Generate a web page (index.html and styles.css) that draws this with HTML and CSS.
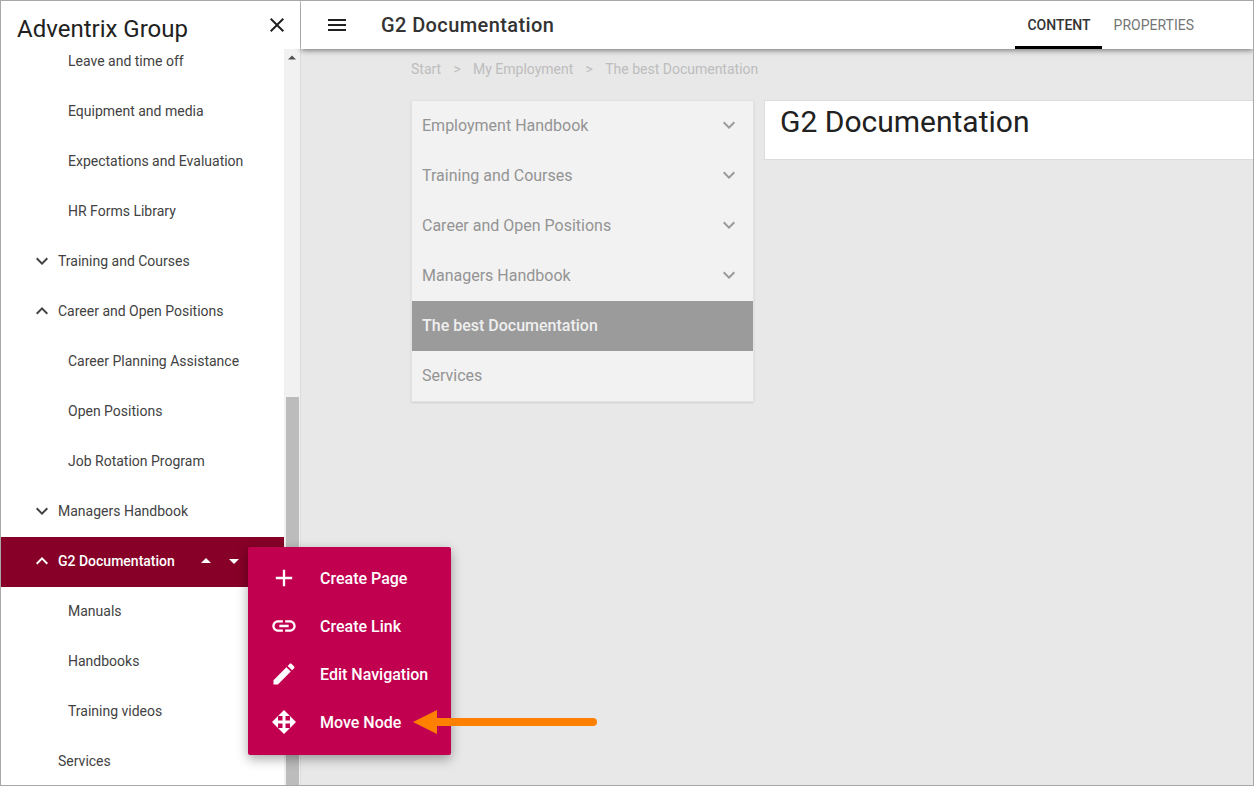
FILE: index.html
```html
<!DOCTYPE html>
<html lang="en">

<head>
    <meta charset="UTF-8">
    <title>G2 Documentation</title>
    <link rel="stylesheet" href="styles.css">
</head>

<body>
    <div class="app">
        <aside class="sidebar">
            <div class="sidebar-head">
                <span class="brand">Adventrix Group</span>
                <svg class="icon close-icon" viewBox="0 0 24 24"><path d="M19 6.41L17.59 5 12 10.59 6.41 5 5 6.41 10.59 12 5 17.59 6.41 19 12 13.41 17.59 19 19 17.59 13.41 12z"/></svg>
            </div>
            <div class="sidebar-body">
                <ul class="tree">
                    <li class="child">Leave and time off</li>
                    <li class="child">Equipment and media</li>
                    <li class="child">Expectations and Evaluation</li>
                    <li class="child">HR Forms Library</li>
                    <li class="parent"><svg class="icon chevron" viewBox="0 0 24 24"><path d="M16.59 8.59L12 13.17 7.41 8.59 6 10l6 6 6-6z"/></svg>Training and Courses</li>
                    <li class="parent"><svg class="icon chevron" viewBox="0 0 24 24"><path d="M12 8l-6 6 1.41 1.41L12 10.83l4.59 4.58L18 14z"/></svg>Career and Open Positions</li>
                    <li class="child">Career Planning Assistance</li>
                    <li class="child">Open Positions</li>
                    <li class="child">Job Rotation Program</li>
                    <li class="parent"><svg class="icon chevron" viewBox="0 0 24 24"><path d="M16.59 8.59L12 13.17 7.41 8.59 6 10l6 6 6-6z"/></svg>Managers Handbook</li>
                    <li class="parent selected">
                        <svg class="icon chevron" viewBox="0 0 24 24"><path d="M12 8l-6 6 1.41 1.41L12 10.83l4.59 4.58L18 14z"/></svg>G2 Documentation
                        <svg class="icon caret caret-up" viewBox="0 0 24 24"><path d="M7 14l5-5 5 5z"/></svg>
                        <svg class="icon caret" viewBox="0 0 24 24"><path d="M7 10l5 5 5-5z"/></svg>
                    </li>
                    <li class="child">Manuals</li>
                    <li class="child">Handbooks</li>
                    <li class="child">Training videos</li>
                    <li class="parent">Services</li>
                </ul>
                <div class="scrollbar">
                    <svg class="scroll-arrow" viewBox="0 0 10 6"><path d="M0 5.5L5 .5l5 5z"/></svg>
                    <div class="scroll-thumb"></div>
                </div>
            </div>
        </aside>

        <main class="main">
            <header class="topbar">
                <svg class="icon menu-icon" viewBox="0 0 24 24"><path d="M3 18h18v-2H3v2zm0-5h18v-2H3v2zm0-7v2h18V6H3z"/></svg>
                <span class="page-title">G2 Documentation</span>
                <nav class="tabs">
                    <span class="tab active">CONTENT</span>
                    <span class="tab">PROPERTIES</span>
                </nav>
            </header>

            <div class="content">
                <div class="breadcrumb">
                    <span>Start</span>
                    <span class="sep">&gt;</span>
                    <span>My Employment</span>
                    <span class="sep">&gt;</span>
                    <span>The best Documentation</span>
                </div>
                <div class="columns">
                    <ul class="side-nav">
                        <li>Employment Handbook<svg class="icon" viewBox="0 0 24 24"><path d="M16.59 8.59L12 13.17 7.41 8.59 6 10l6 6 6-6z"/></svg></li>
                        <li>Training and Courses<svg class="icon" viewBox="0 0 24 24"><path d="M16.59 8.59L12 13.17 7.41 8.59 6 10l6 6 6-6z"/></svg></li>
                        <li>Career and Open Positions<svg class="icon" viewBox="0 0 24 24"><path d="M16.59 8.59L12 13.17 7.41 8.59 6 10l6 6 6-6z"/></svg></li>
                        <li>Managers Handbook<svg class="icon" viewBox="0 0 24 24"><path d="M16.59 8.59L12 13.17 7.41 8.59 6 10l6 6 6-6z"/></svg></li>
                        <li class="current">The best Documentation</li>
                        <li>Services</li>
                    </ul>
                    <div class="doc-card">
                        <h1>G2 Documentation</h1>
                    </div>
                </div>
            </div>
        </main>

        <!-- context menu opened from the selected node -->
        <div class="context-menu">
            <div class="menu-item"><svg class="icon" viewBox="0 0 24 24"><path d="M19 13h-6v6h-2v-6H5v-2h6V5h2v6h6v2z"/></svg>Create Page</div>
            <div class="menu-item"><svg class="icon" viewBox="0 0 24 24"><path d="M3.9 12c0-1.71 1.39-3.1 3.1-3.1h4V7H7c-2.76 0-5 2.24-5 5s2.24 5 5 5h4v-1.9H7c-1.71 0-3.1-1.39-3.1-3.1zM8 13h8v-2H8v2zm9-6h-4v1.9h4c1.71 0 3.1 1.39 3.1 3.1s-1.39 3.1-3.1 3.1h-4V17h4c2.76 0 5-2.24 5-5s-2.24-5-5-5z"/></svg>Create Link</div>
            <div class="menu-item"><svg class="icon" viewBox="0 0 24 24"><path d="M3 17.25V21h3.75L17.81 9.94l-3.75-3.75L3 17.25zM20.71 7.04c.39-.39.39-1.02 0-1.41l-2.34-2.34c-.39-.39-1.02-.39-1.41 0l-1.83 1.83 3.75 3.75 1.83-1.83z"/></svg>Edit Navigation</div>
            <div class="menu-item"><svg class="icon" viewBox="-2 -2 28 28"><path d="M12 0l6 6h-4.5v4.5H18V6l6 6-6 6v-4.5h-4.5V18H18l-6 6-6-6h4.5v-4.5H6V18l-6-6 6-6v4.5h4.5V6H6z"/></svg>Move Node</div>
        </div>

        <svg class="callout-arrow" viewBox="0 0 184 24">
            <path d="M180 12H20" stroke="#ff8000" stroke-width="8" stroke-linecap="round" fill="none"/>
            <path d="M0 12L24 0v24z" fill="#ff8000"/>
        </svg>
    </div>
</body>

</html>
```

FILE: styles.css
```css
* {
    box-sizing: border-box;
}

html,
body {
    height: 100%;
    margin: 0;
}

body {
    font-family: 'Roboto', 'Liberation Sans', sans-serif;
    color: #424242;
    overflow: hidden;
}

ul {
    list-style: none;
    margin: 0;
    padding: 0;
}

.icon {
    width: 24px;
    height: 24px;
    fill: currentColor;
    flex: none;
}

.app {
    position: relative;
    display: flex;
    height: 100%;
    border: 1px solid #a8a8a8;
    overflow: hidden;
}

/* sidebar */

.sidebar {
    display: flex;
    flex-direction: column;
    width: 300px;
    flex: none;
    border-right: 1px solid #dcdcdc;
    background: #fff;
}

.sidebar-head {
    display: flex;
    align-items: center;
    justify-content: space-between;
    height: 48px;
    flex: none;
    padding: 8px 11px 0 16px;
    position: relative;
    z-index: 1;
    background: #fff;
}

.brand {
    font-size: 24px;
    color: #212121;
}

.close-icon {
    margin-top: -8px;
    color: #212121;
}

.sidebar-body {
    display: flex;
    flex: 1;
    min-height: 0;
}

.tree {
    flex: 1;
    margin-top: -12px;
    font-size: 14px;
}

.tree li {
    display: flex;
    align-items: center;
    height: 50px;
    padding-bottom: 2px;
}

.tree .child {
    padding-left: 67px;
}

.tree .parent {
    padding-left: 57px;
}

.tree .chevron {
    margin-left: -28px;
    margin-right: 4px;
}

.tree .selected {
    background: #870027;
    color: #fff;
    font-weight: 500;
}

.caret {
    margin-left: 4px;
}

.caret-up {
    margin-left: 19px;
}

.scrollbar {
    display: flex;
    flex-direction: column;
    width: 16px;
    flex: none;
    background: #f1f1f1;
}

.scroll-arrow {
    width: 8px;
    height: 5px;
    margin: 6px 0 0 4px;
    fill: #505050;
}

.scroll-thumb {
    width: 13px;
    height: 388px;
    margin: auto 0 0 2px;
    background: #bcbcbc;
}

/* main area */

.main {
    display: flex;
    flex-direction: column;
    flex: 1;
    min-width: 0;
    background: #e8e8e8;
}

.topbar {
    display: flex;
    align-items: center;
    height: 48px;
    flex: none;
    padding-left: 24px;
    background: #fff;
    box-shadow: 0 1px 6px rgba(0, 0, 0, 0.55);
    position: relative;
}

.menu-icon {
    color: #212121;
}

.page-title {
    margin-left: 32px;
    font-size: 20px;
    font-weight: 500;
    letter-spacing: 0.4px;
    color: #333;
}

.tabs {
    display: flex;
    align-self: stretch;
    margin-left: auto;
    padding-right: 47px;
}

.tab {
    display: flex;
    align-items: center;
    padding: 2px 12px 0;
    font-size: 14px;
    color: #757575;
    border-bottom: 3px solid transparent;
}

.tab.active {
    padding-right: 11px;
    color: #333;
    font-weight: 500;
    border-bottom-color: #000;
}

.content {
    flex: 1;
    padding: 12px 0 0 110px;
}

.breadcrumb {
    display: flex;
    align-items: center;
    gap: 12.25px;
    height: 16px;
    font-size: 14px;
    color: #bdbdbd;
}

.columns {
    display: flex;
    align-items: flex-start;
    gap: 10px;
    margin-top: 23px;
}

.side-nav {
    width: 343px;
    flex: none;
    border: 1px solid #e2e2e2;
    background: #f2f2f2;
    font-size: 16px;
    color: #949494;
    box-shadow: 0 1px 2px rgba(0, 0, 0, 0.1);
}

.side-nav li {
    display: flex;
    align-items: center;
    justify-content: space-between;
    height: 50px;
    padding: 0 12px 2px 10px;
}

.side-nav .icon {
    color: #9a9a9a;
}

.side-nav .current {
    background: #9b9b9b;
    color: #efefef;
    font-weight: 500;
}

.doc-card {
    flex: 1;
    height: 60px;
    border: 1px solid #dcdcdc;
    border-right: 0;
    background: #fff;
    padding: 1px 0 0 15px;
}

.doc-card h1 {
    margin: 0;
    font-size: 30px;
    font-weight: 400;
    line-height: 40px;
    color: #212121;
}

/* overlays */

.context-menu {
    position: absolute;
    left: 247px;
    top: 546px;
    width: 203px;
    height: 208px;
    padding: 7px 0 9px;
    border-radius: 2px;
    background: #c20050;
    color: #fff;
    font-size: 16px;
    font-weight: 500;
    box-shadow: 0 4px 12px rgba(0, 0, 0, 0.35);
}

.menu-item {
    display: flex;
    align-items: center;
    gap: 22px;
    height: 48px;
    padding-left: 22px;
}

.menu-item .icon {
    width: 28px;
    height: 28px;
}

.callout-arrow {
    position: absolute;
    left: 412px;
    top: 709px;
    width: 184px;
    height: 24px;
}
```
